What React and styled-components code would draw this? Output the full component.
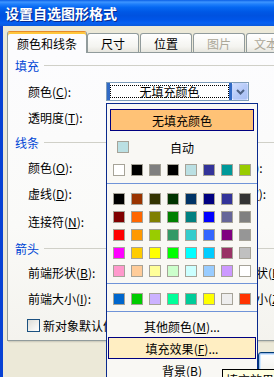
import React from 'react';
import styled, { createGlobalStyle, css } from 'styled-components';

const GlobalStyle = createGlobalStyle`
  html, body { margin: 0; padding: 0; background: #ECE9D8; overflow: hidden; }
  body { font-family: "Noto Sans CJK SC", "Noto Sans", sans-serif; font-size: 12px; color: #000; }
  #root { width: 274px; height: 377px; overflow: hidden; }
`;

const Window = styled.div`
  width: 470px;
  height: 377px;
  display: flex;
  flex-direction: column;
  background: #ECE9D8;
`;

const TitleBar = styled.div`
  flex: none;
  height: 26px;
  display: flex;
  align-items: center;
  padding-left: 5px;
  background: linear-gradient(to bottom, #0A5FE6 0%, #3D95FF 8%, #1F7FFB 16%, #0568F2 28%, #0058E6 45%, #0052E0 60%, #0055E8 75%, #0761F2 88%, #0B5ADC 100%);
  color: #fff;
  font-size: 14px;
  font-weight: bold;
  text-shadow: 1px 1px 0 #0A2A8C;
`;

const Frame = styled.div`
  flex: 1;
  display: flex;
  flex-direction: column;
  border-left: 3px solid #0842D4;
  padding: 5px 0 0 4px;
`;

const TabStrip = styled.div`
  display: flex;
  align-items: flex-end;
  gap: 1px;
  height: 22px;
  margin-bottom: -1px;
  position: relative;
  z-index: 1;
`;

const Tab = styled.div`
  box-sizing: border-box;
  width: ${p => p.$w}px;
  height: 19px;
  margin-bottom: 1px;
  display: flex;
  align-items: center;
  justify-content: center;
  border: 1px solid #919B9C;
  border-bottom: none;
  border-radius: 3px 3px 0 0;
  color: ${p => (p.$disabled ? '#ACA899' : '#000')};
  background: linear-gradient(#FFFFFF, #F4F4F0 70%, #E6E5DE);
  ${p => p.$active && css`
    height: 22px;
    margin-bottom: 0;
    margin-right: -1px;
    padding-top: 2px;
    border-top: 1px solid #E68B2C;
    box-shadow: inset 0 2px 0 #FFC73C;
    background: #FCFCFE;
  `}
`;

const Panel = styled.div`
  box-sizing: border-box;
  border: 1px solid #919B9C;
  background: linear-gradient(to bottom, #FCFCFE 0%, #FAFAF8 60%, #F4F3EE 100%);
  padding-bottom: 3px;
  display: flex;
  flex-direction: column;
  box-shadow: 1px 1px 0 #D0CEBF, 2px 2px 0 #E3E0D0;
`;

const SectionHeader = styled.div`
  height: ${p => p.$h}px;
  display: flex;
  align-items: center;
  padding-left: 7px;
  color: #0046D5;
  &::after {
    content: '';
    flex: 1;
    height: 1px;
    background: #D0D0C8;
    margin-left: 5px;
  }
`;

const FieldRow = styled.div`
  height: ${p => p.$h}px;
  display: grid;
  grid-template-columns: 78px 114px auto;
  align-items: center;
  padding-left: 20px;
`;

const Label = styled.span`
  white-space: nowrap;
`;

const Key = styled.span`
  text-decoration: underline;
`;

const Combo = styled.div`
  position: relative;
  box-sizing: border-box;
  width: ${p => p.$w}px;
  height: 19px;
  display: flex;
  border: 1px solid #7F9DB9;
  background: #fff;
  ${p => p.$span && css`grid-column: span 2;`}
`;

const ComboField = styled.div`
  flex: 1;
  display: flex;
  padding: 2px 0;
  border-left: 3px solid #316AC5;
  border-right: 3px solid #316AC5;
`;

const FocusBox = styled.div`
  flex: 1;
  display: flex;
  align-items: center;
  justify-content: center;
  border: 1px dotted #000;
  line-height: 1;
`;

const DropButton = styled.div`
  box-sizing: border-box;
  width: 16px;
  margin: 0;
  display: flex;
  align-items: center;
  justify-content: center;
  border: 1px solid #C3D3FD;
  border-radius: 2px;
  background: linear-gradient(135deg, #D2DEFC 0%, #B6CAF8 50%, #A9BFF4 100%);
`;

const Popup = styled.div`
  position: absolute;
  left: -1px;
  top: 20px;
  z-index: 10;
  box-sizing: border-box;
  width: 152px;
  height: 290px;
  border: 1px solid #0A2A8C;
  background: #F9F8F4;
  display: flex;
  flex-direction: column;
  padding-top: 5px;
`;

const NoFillButton = styled.div`
  box-sizing: border-box;
  height: 22px;
  margin: 0 3px;
  display: flex;
  align-items: center;
  justify-content: center;
  border: 1px solid #000080;
  background: #FFC276;
`;

const AutoRow = styled.div`
  height: 22px;
  margin-top: 5px;
  display: grid;
  grid-template-columns: 1fr auto 1fr;
  align-items: center;
  padding-left: 10px;
  padding-right: 10px;
`;

const Swatch = styled.span`
  box-sizing: border-box;
  display: block;
  width: 12px;
  height: 12px;
  border: 1px solid #A6A398;
  background: ${p => p.$c};
`;

const SwatchGrid = styled.div`
  display: grid;
  grid-template-columns: repeat(8, 12px);
  grid-auto-rows: 12px;
  gap: 6px;
  justify-content: center;
  margin-top: ${p => p.$mt}px;
`;

const Separator = styled.div`
  height: 1px;
  background: #7094D8;
  margin-top: ${p => p.$mt}px;
`;

const MenuList = styled.div`
  margin-top: 3px;
  display: flex;
  flex-direction: column;
`;

const MenuItem = styled.div`
  position: relative;
  box-sizing: border-box;
  height: 22px;
  margin: 0 1px;
  display: flex;
  align-items: center;
  justify-content: center;
  border: 1px solid transparent;
  ${p => p.$hot && css`
    border-color: #000080;
    background: #FFEEC2;
  `}
`;

const Tooltip = styled.div`
  position: absolute;
  left: 113px;
  top: 31px;
  z-index: 20;
  padding: 1px 3px;
  border: 1px solid #000;
  background: #FFFFE1;
  white-space: nowrap;
`;

const CheckRow = styled.div`
  height: ${p => p.$h}px;
  display: flex;
  align-items: center;
  gap: 3px;
  padding-left: 19px;
`;

const CheckBox = styled.span`
  box-sizing: border-box;
  width: 13px;
  height: 13px;
  border: 1px solid #1C5180;
  background: linear-gradient(135deg, #DCDCD7 0%, #F2F2EF 60%, #FFFFFF 100%);
`;

const ButtonRow = styled.div`
  display: flex;
  gap: 6px;
  margin-top: 11px;
  padding-left: 251px;
`;

const DialogButton = styled.div`
  box-sizing: border-box;
  width: 75px;
  height: 23px;
  display: flex;
  align-items: center;
  justify-content: center;
  border: 1px solid #003C74;
  border-radius: 3px;
  background: linear-gradient(#FFFFFF, #F3F3EF 80%, #D6D0C5);
  ${p => p.$default && css`box-shadow: inset 0 0 0 1px #98B8EA, inset 0 0 0 2px #CEE7FF;`}
`;

const scheme = ['#FFFFFF', '#000000', '#808080', '#000000', '#BBE0E3', '#333399', '#009999', '#99CC00'];
const standard = [
  '#000000', '#993300', '#333300', '#003300', '#003366', '#000080', '#333399', '#333333',
  '#800000', '#FF6600', '#808000', '#008000', '#008080', '#0000FF', '#666699', '#808080',
  '#FF0000', '#FF9900', '#99CC00', '#339966', '#33CCCC', '#3366FF', '#800080', '#969696',
  '#FF00FF', '#FFCC00', '#FFFF00', '#00FF00', '#00FFFF', '#00CCFF', '#993366', '#C0C0C0',
  '#FF99CC', '#FFCC99', '#FFFF99', '#CCFFCC', '#CCFFFF', '#99CCFF', '#CC99FF', '#FFFFFF',
];
const recent = ['#0066CC', '#00CC00', '#CCB2FF', '#00FF99', '#00CC99', '#FFFF00', '#EEEEEE', '#FF3300'];

const Chevron = () => (
  <svg width="9" height="6" viewBox="0 0 9 6">
    <path d="M1 1 L4.5 4.5 L8 1" stroke="#4D6185" strokeWidth="2" fill="none" />
  </svg>
);

const L = ({ text, k, tail = ':' }) => (
  <Label>
    {text}(<Key>{k}</Key>){tail}
  </Label>
);

export default function App() {
  return (
    <>
      <GlobalStyle />
      <Window>
        <TitleBar>设置自选图形格式</TitleBar>
        <Frame>
          <TabStrip>
            <Tab $w={80} $active>颜色和线条</Tab>
            <Tab $w={52}>尺寸</Tab>
            <Tab $w={52}>位置</Tab>
            <Tab $w={52} $disabled>图片</Tab>
            <Tab $w={52} $disabled>文本框</Tab>
            <Tab $w={52} $disabled>Web</Tab>
          </TabStrip>
          <Panel>
            <SectionHeader $h={25}>填充</SectionHeader>
            <FieldRow $h={27}>
              <L text="颜色" k="C" />
              <Combo $w={143} $span>
                <ComboField>
                  <FocusBox>无填充颜色</FocusBox>
                </ComboField>
                <DropButton><Chevron /></DropButton>
                <Popup>
                  <NoFillButton>无填充颜色</NoFillButton>
                  <AutoRow>
                    <Swatch $c="#BBE0E3" />
                    <span>自动</span>
                  </AutoRow>
                  <SwatchGrid $mt={6}>
                    {scheme.map((c, i) => <Swatch key={i} $c={c} />)}
                  </SwatchGrid>
                  <Separator $mt={7} />
                  <SwatchGrid $mt={9}>
                    {standard.map((c, i) => <Swatch key={i} $c={c} />)}
                  </SwatchGrid>
                  <Separator $mt={6} />
                  <SwatchGrid $mt={9}>
                    {recent.map((c, i) => <Swatch key={i} $c={c} />)}
                  </SwatchGrid>
                  <Separator $mt={6} />
                  <MenuList>
                    <MenuItem><L text="其他颜色" k="M" tail="..." /></MenuItem>
                    <MenuItem $hot>
                      <L text="填充效果" k="F" tail="..." />
                      <Tooltip>填充效果</Tooltip>
                    </MenuItem>
                    <MenuItem><L text="背景" k="B" tail="" /></MenuItem>
                  </MenuList>
                </Popup>
              </Combo>
            </FieldRow>
            <FieldRow $h={24}>
              <L text="透明度" k="T" />
            </FieldRow>
            <SectionHeader $h={26}>线条</SectionHeader>
            <FieldRow $h={24}>
              <L text="颜色" k="O" />
              <Combo $w={100} />
              <L text="样式" k="S" />
            </FieldRow>
            <FieldRow $h={28}>
              <L text="虚线" k="D" />
              <Combo $w={100} />
              <L text="粗细" k="W" />
            </FieldRow>
            <FieldRow $h={28}>
              <L text="连接符" k="N" />
              <Combo $w={100} />
            </FieldRow>
            <SectionHeader $h={26}>箭头</SectionHeader>
            <FieldRow $h={22}>
              <L text="前端形状" k="B" />
              <Combo $w={100} />
              <L text="后端形状" k="E" />
            </FieldRow>
            <FieldRow $h={30}>
              <L text="前端大小" k="I" />
              <Combo $w={100} />
              <L text="后端大小" k="Z" />
            </FieldRow>
            <CheckRow $h={24}>
              <CheckBox />
              <L text="新对象默认值" k="F" tail="" />
            </CheckRow>
          </Panel>
          <ButtonRow>
            <DialogButton $default>确定</DialogButton>
            <DialogButton>取消</DialogButton>
          </ButtonRow>
        </Frame>
      </Window>
    </>
  );
}
